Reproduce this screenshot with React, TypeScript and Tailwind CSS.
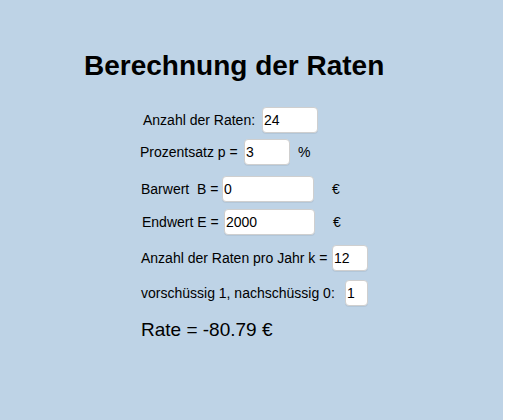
import React from "react";

type FieldProps = {
  value: string;
  width: string;
};

function Field({ value, width }: FieldProps) {
  return (
    <input
      readOnly
      defaultValue={value}
      className={
        "h-[26px] rounded-[4px] border border-[#cfcfcf] bg-white pl-[1px] text-[14px] text-black outline-none shadow-[0_1px_0_rgba(0,0,0,0.06)] " +
        width
      }
    />
  );
}

export default function App() {
  return (
    <div
      className="w-[503px] h-[420px] bg-[#bed3e6] text-black flex flex-col"
      style={{ fontFamily: '"Liberation Sans", Arial, sans-serif' }}
    >
      <h1 className="mt-[50px] pl-[84px] text-[28px] leading-[32px] font-bold">
        Berechnung der Raten
      </h1>

      <div className="mt-[25px] pl-[143px] flex items-center h-[26px] text-[14px]">
        <span className="w-[119px] whitespace-nowrap">Anzahl der Raten:</span>
        <Field value="24" width="w-[56px]" />
      </div>

      <div className="mt-[6px] pl-[140px] flex items-center h-[26px] text-[14px]">
        <span className="w-[104px] whitespace-nowrap">Prozentsatz p =</span>
        <Field value="3" width="w-[46px]" />
        <span className="ml-[8px]">%</span>
      </div>

      <div className="mt-[11px] pl-[141px] flex items-center h-[26px] text-[14px]">
        <span className="w-[81px] whitespace-pre">Barwert  B =</span>
        <Field value="0" width="w-[92px]" />
        <span className="ml-[18px]">€</span>
      </div>

      <div className="mt-[7px] pl-[142px] flex items-center h-[26px] text-[14px]">
        <span className="w-[82px] whitespace-nowrap">Endwert E =</span>
        <Field value="2000" width="w-[91px]" />
        <span className="ml-[18px]">€</span>
      </div>

      <div className="mt-[10px] pl-[141px] flex items-center h-[26px] text-[14px]">
        <span className="w-[191px] whitespace-nowrap">
          Anzahl der Raten pro Jahr k =
        </span>
        <Field value="12" width="w-[36px]" />
      </div>

      <div className="mt-[9px] pl-[141px] flex items-center h-[26px] text-[14px]">
        <span className="w-[204px] whitespace-nowrap">
          vorschüssig 1, nachschüssig 0:
        </span>
        <Field value="1" width="w-[23px]" />
      </div>

      <p className="mt-[13px] pl-[141px] text-[19px] leading-[22px]">
        Rate = -80.79 €
      </p>
    </div>
  );
}
